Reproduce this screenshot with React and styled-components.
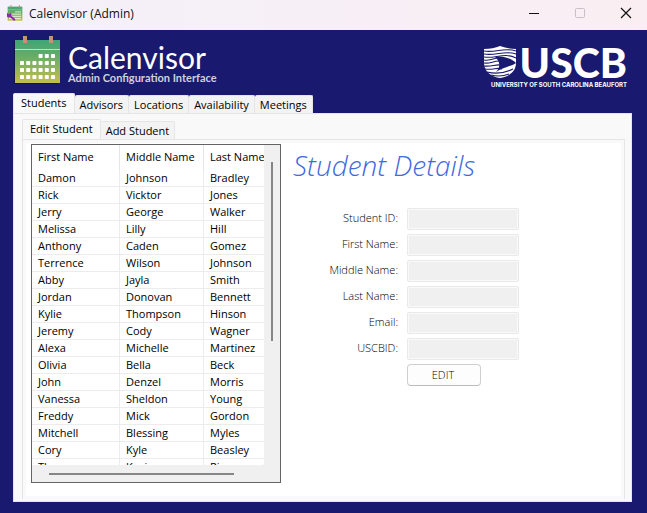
import React, { useState } from "react";
import styled, { createGlobalStyle } from "styled-components";

const GlobalStyle = createGlobalStyle`
  * { box-sizing: border-box; }
  body { margin: 0; font-family: "Open Sans", "Noto Sans", sans-serif; font-size: 11px; color: #000; }
  button, input { font: inherit; color: inherit; }
`;

const Window = styled.div`
  display: flex;
  flex-direction: column;
  height: 100vh;
  background: #19196f;
`;

const TitleBar = styled.header`
  display: flex;
  align-items: center;
  flex: 0 0 30px;
  padding: 0 12px 4px 7px;
  gap: 6px;
  background: linear-gradient(90deg, #f4f1fa, #faeef2);
`;

const WindowTitle = styled.span`
  flex: 1;
  padding-top: 2px;
  font-size: 12px;
  line-height: 16px;
  color: #111;
`;

const WindowButtons = styled.div`
  display: flex;
  gap: 28px;
`;

const WindowButton = styled.button`
  display: flex;
  padding: 0;
  border: 0;
  width: 18px;
  height: 18px;
  align-items: center;
  justify-content: center;
  background: none;
  color: ${(p) => (p.disabled ? "#c9bfc6" : "#111")};
`;

const Banner = styled.div`
  display: flex;
  justify-content: space-between;
  flex: 0 0 63px;
  padding: 5px 20px 0 13px;
  color: #fff;
`;

const Brand = styled.div`
  display: flex;
  gap: 6px;
`;

const BrandName = styled.div`
  padding-top: 7px;
  font: 400 30px/30px Lato, sans-serif;
`;

const BrandNote = styled.div`
  font: 700 11px/12px Lato, sans-serif;
  color: #d0d0dc;
`;

const School = styled.div`
  display: flex;
  flex-direction: column;
  align-items: flex-end;
  padding-top: 9px;
`;

const SchoolMark = styled.div`
  display: flex;
  gap: 3px;
  height: 36px;
  padding-top: 1px;
  font: 900 41px/36px Lato, sans-serif;
`;

const SchoolName = styled.div`
  padding-top: 1px;
  font: 700 6px/8px Inter, sans-serif;
  white-space: nowrap;
`;

const Body = styled.main`
  display: flex;
  flex-direction: column;
  flex: 1;
  min-height: 0;
  padding: 0 15px 11px 13px;
`;

const TabRow = styled.div`
  display: flex;
  align-items: flex-end;
  height: 20px;
`;

const Tab = styled.button`
  height: ${(p) => (p["aria-selected"] ? 21 : 18)}px;
  margin-bottom: ${(p) => (p["aria-selected"] ? -1 : 0)}px;
  padding: ${(p) => (p["aria-selected"] ? "0 7px 2px" : "0 5px")};
  border: 1px solid #e5e5e5;
  border-bottom: 0;
  border-left-width: ${(p) => (p["aria-selected"] ? 1 : 0)}px;
  border-radius: 2px 2px 0 0;
  background: ${(p) => (p["aria-selected"] ? "#f9f9f9" : "#f3f3f3")};
  font-weight: 500;
  line-height: 16px;
  white-space: nowrap;
`;

const OuterPanel = styled.div`
  display: flex;
  flex-direction: column;
  flex: 1;
  min-height: 0;
  padding: 5px 6px 2px 8px;
  border: 1px solid #e5e5e5;
  background: #f9f9f9;
`;

const InnerPanel = styled.div`
  display: flex;
  flex: 1;
  min-height: 0;
  gap: 12px;
  padding: 4px 4px 16px 8px;
  border: solid #e5e5e5;
  border-width: 1px 1px 0 1px;
  box-shadow: inset 0 0 0 3px #f9f9f9;
  background: #fff;
`;

const ListBox = styled.div`
  display: grid;
  flex: 0 0 250px;
  grid-template: minmax(0, 1fr) 17px / minmax(0, 1fr) 16px;
  border: 1px solid #646464;
  background: #f0f0f0;
`;

const ListView = styled.div`
  overflow: hidden;
  background: #fff;
  border-radius: 0 0 2px 0;
`;

const Table = styled.table`
  width: 100%;
  table-layout: fixed;
  border-collapse: separate;
  border-spacing: 0;
  font-weight: 500;
`;

const HeadCell = styled.th`
  width: ${(p) => p.$width};
  height: 25px;
  padding: 0 0 2px 6px;
  border-right: 1px solid #e5e5e5;
  font-weight: 500;
  text-align: left;
  white-space: nowrap;
  &:last-child { border-right: 0; }
`;

const Cell = styled.td`
  height: 17px;
  padding: 0 0 0 6px;
  border-right: 1px solid #ececec;
  border-bottom: 1px solid #ececec;
  line-height: 16px;
  &:last-child { border-right: 0; }
`;

const VerticalTrack = styled.div`
  padding: 17px 0 0 7px;
`;

const HorizontalTrack = styled.div`
  padding: 8px 0 0 17px;
`;

const Thumb = styled.div`
  width: ${(p) => (p.$vertical ? "2px" : "86%")};
  height: ${(p) => (p.$vertical ? "59%" : "2px")};
  background: #868686;
`;

const Details = styled.section`
  flex: 1;
`;

const Heading = styled.h1`
  margin: 0 0 22px;
  font-size: 28px;
  line-height: 42px;
  font-weight: 300;
  font-style: italic;
  color: #4169e1;
`;

const Form = styled.form`
  display: grid;
  grid-template-columns: 106px 112px;
  align-items: center;
  gap: 4px 8px;
`;

const Label = styled.label`
  padding: 0 1px 2px 0;
  font-weight: 300;
  text-align: right;
  line-height: 20px;
  color: #000;
`;

const Field = styled.input`
  width: 100%;
  height: 22px;
  padding: 0 4px;
  border: 1px solid #e9e9e9;
  border-radius: 2px;
  outline: 0;
  box-shadow: inset 0 0 0 1px #fafafa;
  background: #f0f0f0;
`;

const EditButton = styled.button`
  grid-column: 2;
  width: 74px;
  height: 22px;
  padding: 0 2px 2px 0;
  border: 1px solid #d0d0d0;
  border-bottom-color: #bbb;
  border-radius: 4px;
  background: #fdfdfd;
  font-weight: 300;
`;

const students = [
  ["Damon", "Johnson", "Bradley"],
  ["Rick", "Vicktor", "Jones"],
  ["Jerry", "George", "Walker"],
  ["Melissa", "Lilly", "Hill"],
  ["Anthony", "Caden", "Gomez"],
  ["Terrence", "Wilson", "Johnson"],
  ["Abby", "Jayla", "Smith"],
  ["Jordan", "Donovan", "Bennett"],
  ["Kylie", "Thompson", "Hinson"],
  ["Jeremy", "Cody", "Wagner"],
  ["Alexa", "Michelle", "Martinez"],
  ["Olivia", "Bella", "Beck"],
  ["John", "Denzel", "Morris"],
  ["Vanessa", "Sheldon", "Young"],
  ["Freddy", "Mick", "Gordon"],
  ["Mitchell", "Blessing", "Myles"],
  ["Cory", "Kyle", "Beasley"],
  ["Thomas", "Kevin", "Rice"],
];

const columns = [
  ["First Name", "88px"],
  ["Middle Name", "84px"],
  ["Last Name", "auto"],
];

const fields = ["Student ID", "First Name", "Middle Name", "Last Name", "Email", "USCBID"];

function CalendarIcon({ size, id, wrench }) {
  const dots = [];
  for (let row = 0; row < 4; row++) {
    for (let col = row === 0 ? 3 : 0; col < 6; col++) {
      dots.push([7 + col * 6.2, 19 + row * 7]);
    }
  }
  return (
    <svg width={size} height={size} viewBox="0 0 49 49" aria-hidden="true">
      <defs>
        <linearGradient id={id} x1="0" y1="0" x2="0" y2="1">
          <stop offset="0" stopColor="#3da777" />
          <stop offset="0.35" stopColor="#62ac68" />
          <stop offset="1" stopColor="#c6bd4b" />
        </linearGradient>
      </defs>
      {!wrench && <path d="M1 6h44v43H1z" fill="#111445" />}
      <path d="M2 5h45v43H2z" fill={`url(#${id})`} />
      <path d="M2 14.5h45" stroke="#b7e5ca" strokeWidth="1.2" />
      <path d="M10 1h4v7h-4zM36 1h4v7h-4z" fill="#c99274" />
      {dots.map(([x, y]) => (
        <rect key={`${x}-${y}`} x={x} y={y} width="4" height="4" rx="0.7" fill="#fff" />
      ))}
      {wrench && (
        <path d="M0 24l6 4 4-4 4 3-1 6 13 11-4 5-13-12-6 1-6-5z" fill="#8b27b0" />
      )}
    </svg>
  );
}

function Shield() {
  return (
    <svg width="33" height="34" viewBox="0 0 33 34" aria-hidden="true">
      <path
        d="M0 4Q9 4 16 1Q24 4 32 4V18C32 27 24 32 16 33C8 32 0 27 0 18Z"
        fill="#fff"
      />
      <g fill="none" stroke="#19196f" strokeWidth="1.1">
        <path d="M0 6C12 8 20 2 32 6" />
        <path d="M0 9C12 11 21 5 32 9" />
        <path d="M0 12C11 14 20 7 32 13" />
        <path d="M0 15C5 16 9 14 13 13" />
        <path d="M0 18C6 19 9 16 15 16" />
        <path d="M0 21C8 22 11 19 17 20" />
        <path d="M1 24C10 25 13 22 18 24" />
        <path d="M3 27C11 29 21 28 29 24" />
        <path d="M7 30C15 32 20 31 25 29" />
      </g>
      <path d="M11 12C19 10 28 14 32 18C28 21 20 22 12 27C17 22 16 16 11 12Z" fill="#19196f" />
    </svg>
  );
}

function Tabs({ names, label }) {
  const [active, setActive] = useState(names[0]);
  return (
    <TabRow role="tablist" aria-label={label}>
      {names.map((name) => (
        <Tab key={name} role="tab" aria-selected={name === active} onClick={() => setActive(name)}>
          {name}
        </Tab>
      ))}
    </TabRow>
  );
}

function StudentList() {
  return (
    <ListBox>
      <ListView>
        <Table>
          <thead>
            <tr>
              {columns.map(([name, width]) => (
                <HeadCell key={name} $width={width} scope="col">{name}</HeadCell>
              ))}
            </tr>
          </thead>
          <tbody>
            {students.map((student) => (
              <tr key={student.join(" ")}>
                {student.map((part, i) => <Cell key={i}>{part}</Cell>)}
              </tr>
            ))}
          </tbody>
        </Table>
      </ListView>
      <VerticalTrack><Thumb $vertical /></VerticalTrack>
      <HorizontalTrack><Thumb /></HorizontalTrack>
    </ListBox>
  );
}

export default function App() {
  return (
    <>
      <GlobalStyle />
      <Window>
        <TitleBar>
          <CalendarIcon size={16} id="titleIcon" wrench />
          <WindowTitle>Calenvisor (Admin)</WindowTitle>
          <WindowButtons>
            <WindowButton aria-label="Minimize">
              <svg width="12" height="12"><path d="M1 6.5h10" stroke="currentColor" /></svg>
            </WindowButton>
            <WindowButton aria-label="Maximize" disabled>
              <svg width="12" height="12"><rect x="1.5" y="1.5" width="9" height="9" rx="1" fill="none" stroke="currentColor" /></svg>
            </WindowButton>
            <WindowButton aria-label="Close">
              <svg width="12" height="12"><path d="M1 1l10 10M11 1L1 11" stroke="currentColor" strokeWidth="1.2" /></svg>
            </WindowButton>
          </WindowButtons>
        </TitleBar>
        <Banner>
          <Brand>
            <CalendarIcon size={49} id="brandIcon" />
            <div>
              <BrandName>Calenvisor</BrandName>
              <BrandNote>Admin Configuration Interface</BrandNote>
            </div>
          </Brand>
          <School>
            <SchoolMark><Shield /><span>USCB</span></SchoolMark>
            <SchoolName>UNIVERSITY OF SOUTH CAROLINA BEAUFORT</SchoolName>
          </School>
        </Banner>
        <Body>
          <Tabs label="Sections" names={["Students", "Advisors", "Locations", "Availability", "Meetings"]} />
          <OuterPanel>
            <Tabs label="Student actions" names={["Edit Student", "Add Student"]} />
            <InnerPanel>
              <StudentList />
              <Details>
                <Heading>Student Details</Heading>
                <Form onSubmit={(e) => e.preventDefault()}>
                  {fields.map((name) => {
                    const id = name.toLowerCase().replace(" ", "-");
                    return (
                      <React.Fragment key={name}>
                        <Label htmlFor={id}>{name}:</Label>
                        <Field id={id} type="text" readOnly />
                      </React.Fragment>
                    );
                  })}
                  <EditButton type="button">EDIT</EditButton>
                </Form>
              </Details>
            </InnerPanel>
          </OuterPanel>
        </Body>
      </Window>
    </>
  );
}
